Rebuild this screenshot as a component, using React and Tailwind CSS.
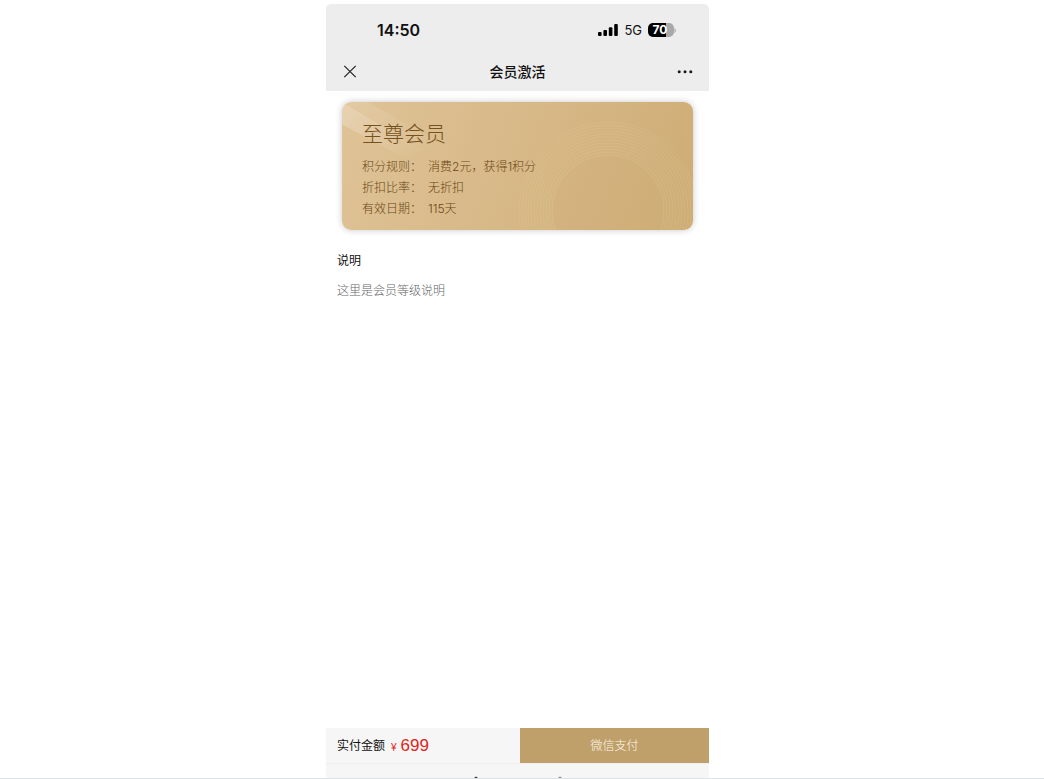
import React from "react";

const rings = Array.from({ length: 12 }, (_, i) => 56 + i * 3);

const benefits = [
  ["积分规则：", "消费2元，获得1积分"],
  ["折扣比率：", "无折扣"],
  ["有效日期：", "115天"],
];

function StatusBar() {
  return (
    <div className="flex h-13 items-center justify-between pr-[33px] pl-[51px]">
      <time className="text-base font-semibold">14:50</time>
      <div className="flex items-center gap-1.5">
        <svg width="20" height="12" viewBox="0 0 20 12" aria-hidden="true">
          <rect x="0" y="8" width="3.6" height="4" rx="1" />
          <rect x="5.4" y="6" width="3.6" height="6" rx="1" />
          <rect x="10.8" y="3.3" width="3.6" height="8.7" rx="1" />
          <rect x="16.2" y="0" width="3.6" height="12" rx="1" />
        </svg>
        <span className="text-[13px] leading-4">5G</span>
        <div className="flex items-center">
          <div className="flex h-3.5 w-[26px] items-center justify-center rounded-[5px] bg-linear-to-r from-black from-70% to-[#a9a9a9] to-70% pr-0.5 text-xs leading-none font-bold text-white">
            70
          </div>
          <svg width="2" height="5" viewBox="0 0 2 5" fill="#a9a9a9" aria-hidden="true">
            <path d="M.5 0C2.3 1 2.3 4 .5 5Z" />
          </svg>
        </div>
      </div>
    </div>
  );
}

function TitleBar() {
  return (
    <div className="grid h-[35px] grid-cols-3 items-start px-4">
      <button type="button" aria-label="关闭" className="flex h-8 w-4 items-center justify-center">
        <svg className="shrink-0" width="14" height="14" viewBox="0 0 14 14" fill="none" stroke="#222" strokeWidth="1.2" aria-hidden="true">
          <path d="M1.3 .8 12.7 12.2M12.7 .8 1.3 12.2" />
        </svg>
      </button>
      <h1 className="pt-1 text-center text-[14px] leading-6 font-medium">会员激活</h1>
      <button type="button" aria-label="更多" className="flex h-8 items-center justify-self-end">
        <svg width="16" height="4" viewBox="0 0 16 4" fill="#181818" aria-hidden="true">
          <circle cx="2.2" cy="1.8" r="1.5" />
          <circle cx="8" cy="1.8" r="1.5" />
          <circle cx="13.8" cy="1.8" r="1.5" />
        </svg>
      </button>
    </div>
  );
}

function MemberCard() {
  return (
    <section className="relative mx-4 mt-[11px] overflow-hidden rounded-[9px] bg-linear-[110deg,#dfc397,#d7b887_50%,#ceac74] px-5 pt-4 pb-[11px] text-[#6b4714] shadow-[0_0_7px_rgba(0,0,0,0.22)]">
      <svg className="absolute inset-0 size-full" viewBox="0 0 352 128" preserveAspectRatio="xMaxYMid slice" fill="none" aria-hidden="true">
        <defs>
          <linearGradient id="beam" x1="0" y1="0" x2="1" y2="1">
            <stop offset="0" stopColor="#fff" stopOpacity=".27" />
            <stop offset="1" stopColor="#fff" stopOpacity="0" />
          </linearGradient>
        </defs>
        <path d="M0 0 80 48 64 56 0 22Z" fill="url(#beam)" />
        <path d="M0 0H27L110 48 76 48Z" fill="url(#beam)" opacity=".45" />
        <circle cx="267" cy="109" r="55" fill="#c9a56c" fillOpacity=".05" />
        <circle cx="267" cy="109" r="72" stroke="#efd5a8" strokeWidth="34" strokeOpacity=".03" />
        {rings.map((r) => (
          <circle key={r} cx="267" cy="109" r={r} stroke="#f4dfba" strokeWidth=".7" strokeOpacity=".2" />
        ))}
      </svg>
      <div className="relative">
        <h2 className="text-[21px] leading-8 font-light text-[#75511e]">至尊会员</h2>
        <dl className="mt-1.5 grid grid-cols-[auto_1fr] gap-x-1.5 text-[12px] leading-[21px] font-light">
          {benefits.map(([label, value]) => (
            <React.Fragment key={label}>
              <dt>{label}</dt>
              <dd>{value}</dd>
            </React.Fragment>
          ))}
        </dl>
      </div>
    </section>
  );
}

export default function App() {
  return (
    <div className="flex min-h-screen flex-col border-b border-[#dce3eb] bg-white pt-1 font-['Inter','Noto_Sans_CJK_SC',sans-serif] text-[#111]">
      <div className="flex grow justify-center pr-[9px]">
        <div className="flex w-full max-w-[383px] flex-col">
          <header className="rounded-t-[5px] bg-[#ededed]">
            <StatusBar />
            <TitleBar />
          </header>
          <main className="grow">
            <MemberCard />
            <section className="px-[11px] pt-[21px] text-[12px]">
              <h2 className="leading-5">说明</h2>
              <p className="mt-2.5 leading-5 font-light text-[#666]">这里是会员等级说明</p>
            </section>
          </main>
          <footer className="bg-[#f6f6f6]">
            <div className="flex h-[35px]">
              <div className="flex flex-1 items-center gap-1.5 pl-[11px]">
                <span className="text-[12px]">实付金额</span>
                <span className="flex items-baseline gap-1 font-['Liberation_Sans','Noto_Sans_CJK_SC',sans-serif] text-[#e02420]">
                  <span className="text-[10px]">¥</span>
                  <span className="text-[17px]">699</span>
                </span>
              </div>
              <button type="button" className="w-[189px] bg-[#bfa06b] text-[12px] font-light text-[#fff7e8]">
                微信支付
              </button>
            </div>
            <div className="flex h-[15px] items-end justify-center gap-20 border-t border-[#eee]">
              <svg width="4" height="2" viewBox="0 0 4 2" fill="#333" aria-hidden="true">
                <path d="M0 2 2 .5 4 2Z" />
              </svg>
              <svg width="4" height="2" viewBox="0 0 4 2" fill="#888" aria-hidden="true">
                <path d="M0 2 2 .5 4 2Z" />
              </svg>
            </div>
          </footer>
        </div>
      </div>
    </div>
  );
}
